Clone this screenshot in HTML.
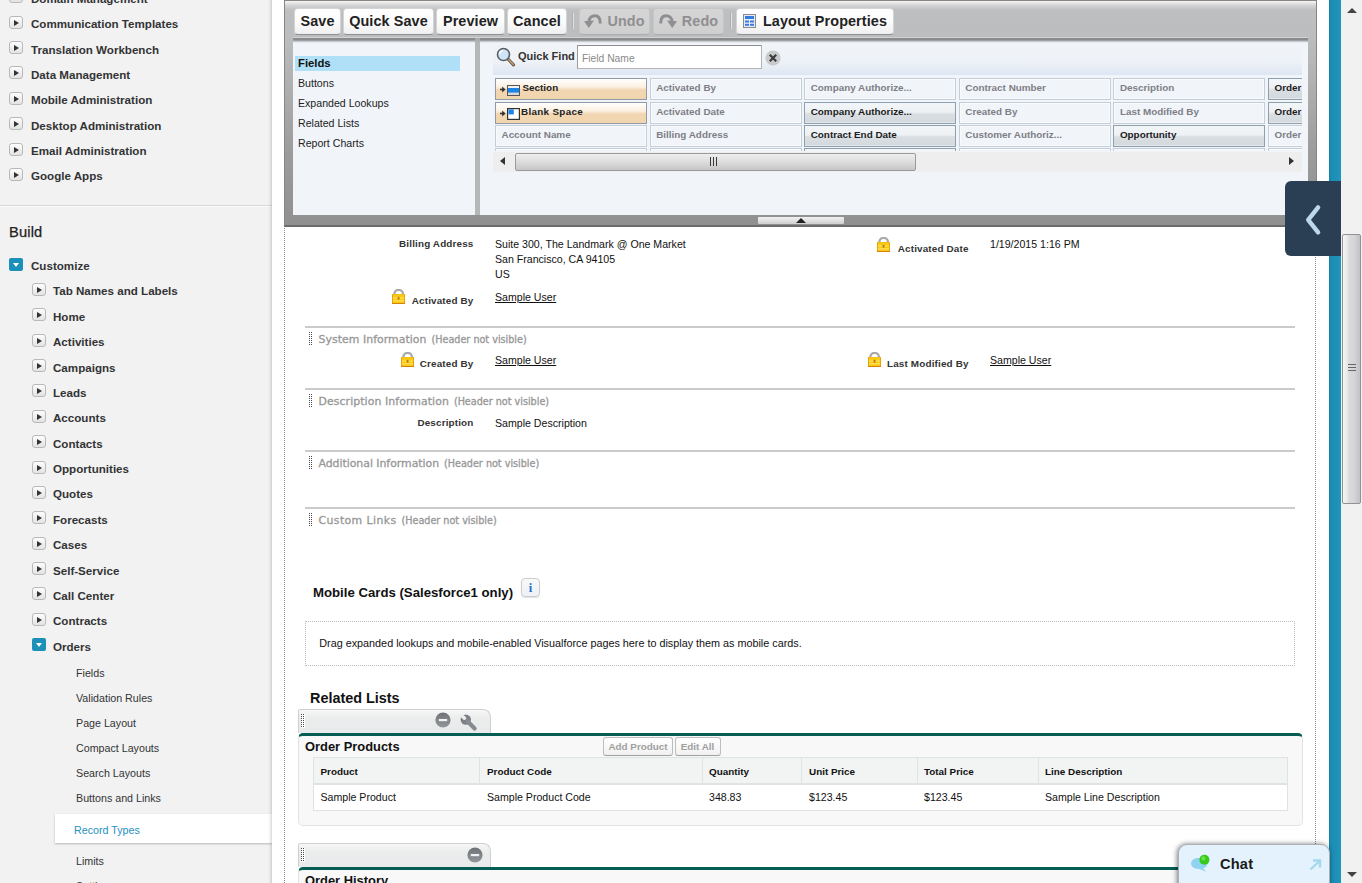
<!DOCTYPE html>
<html lang="en">
<head>
<meta charset="utf-8">
<title>Order Page Layout</title>
<style>
*{box-sizing:border-box;margin:0;padding:0}
html,body{width:1362px;height:883px;overflow:hidden;background:#fff}
body{position:relative;font-family:"Liberation Sans",sans-serif;font-size:12px;color:#222}
.abs{position:absolute}
/* ---------- sidebar ---------- */
#side{z-index:5;position:absolute;left:0;top:0;width:272px;height:883px;background:#f2f2f2;overflow:hidden}
#side:after{content:"";position:absolute;right:0;top:0;width:4px;height:100%;background:linear-gradient(to right,rgba(0,0,0,0),rgba(0,0,0,.05) 50%,rgba(0,0,0,.15))}
.n1,.n2,.n3{position:absolute;white-space:nowrap;line-height:16px;height:16px}
.n1{left:31px;font-weight:bold;font-size:11.6px;color:#333435}
.n2{left:53px;font-weight:bold;font-size:11.6px;color:#333435}
.n3{left:76px;font-size:10.7px;color:#333435}
.tg{position:absolute;width:14px;height:13px;border:1px solid #b9b9b9;border-radius:3px;background:linear-gradient(#fdfdfd,#e3e3e3)}
.tg:after{content:"";position:absolute;left:4px;top:2.5px;border-left:5px solid #333;border-top:3px solid transparent;border-bottom:3px solid transparent}
.tgo{position:absolute;width:14px;height:13px;border-radius:2px;background:#1b90b8}
.tgo:after{content:"";position:absolute;left:3.5px;top:4.5px;border-top:4.5px solid #fff;border-left:3.5px solid transparent;border-right:3.5px solid transparent}
/* ---------- main frame ---------- */
#main{position:absolute;left:0;top:0;width:1362px;height:883px;overflow:hidden}
#main .abs{position:absolute}
.vdot{position:absolute;top:228px;width:1px;height:656px;background-image:linear-gradient(#8a8a8a 50%,transparent 50%);background-size:1px 2px}
#bluebar{position:absolute;left:1329px;top:0;width:12px;height:883px;background:linear-gradient(to right,#0f7fa6 0,#1c8cb2 15%,#1e90b7 60%,#2096bc 100%)}
#vscroll{position:absolute;left:1341px;top:0;width:21px;height:883px;background:#f1f1f1}
#vthumb{position:absolute;left:1px;top:234px;width:19px;height:270px;border:1px solid #929292;border-radius:2px;background:linear-gradient(to right,#f6f6f6,#e6e6e7 28%,#dadadc 36%,#d6d6d9 65%,#c5c5c9 95%)}
/* palette */
#pal{position:absolute;left:284px;top:0;width:1033px;height:227px;border:1px solid #8b8485;border-bottom:2px solid #6b6b6b;background:linear-gradient(#f6f6f6 0,#d6d6d7 4px,#bebfc1 9px,#bcbdbf 36px,#b1b1b2 80px,#9c9c9c 150px,#909090 100%)}
#palin{position:absolute;left:8px;top:39px;width:1015px;height:175px;background:#f1f5f9}
#paltopsh{z-index:3;position:absolute;left:8px;top:36px;width:1015px;height:6px;background:linear-gradient(#d2d2d3 0,#d2d2d3 1px,#8a8b8d 1px,#8a8b8d 3px,#b3b6b9 4px,#dce0e4 5px,#f1f5f9 6px)}
.tb{position:absolute;top:7px;height:27px;border:1px solid #d4d4d5;border-bottom-color:#909092;border-radius:4px;background:linear-gradient(#fff,#fbfbfb 50%,#efefef);font-weight:bold;font-size:14.4px;line-height:25px;text-align:center;color:#222;white-space:nowrap;letter-spacing:.1px}
.tb.dis{background:linear-gradient(#d5d5d6,#cfcfd0);border-color:#c6c6c7;border-bottom-color:#adadaf;color:#8f8f91}
.tsep{position:absolute;top:12px;width:2px;height:16px;background:#e2e2e3;border-left:1px solid #afafb1}
.cat{position:absolute;left:13px;font-size:10.6px;line-height:14px;color:#222;white-space:nowrap}
.pc{position:absolute;width:152px;height:22px;border:1px solid #c3ced8;background:#f1f5f9;box-shadow:inset 0 0 0 1px #f8fafc;font-weight:bold;font-size:9.9px;line-height:18px;padding-left:5.5px;color:#7e7e86;white-space:nowrap;overflow:hidden}
.pc.en{box-shadow:inset 0 -1px 0 #e4e8eb;border-color:#8e9fae;background:linear-gradient(#f3f6f8 0,#eef1f4 45%,#d9dee2 55%,#d3d9de 100%);color:#1c1c1c}
.pc.sp{box-shadow:none;border-color:#8e9aa5;background:linear-gradient(#fff 0,#fbefdf 40%,#f1d6b1 55%,#f0d5af 100%);color:#222}
/* ---------- layout content ---------- */
.lb{position:absolute;letter-spacing:.16px;font-weight:bold;font-size:9.9px;line-height:14px;color:#333;white-space:nowrap;text-align:right}
.vl{position:absolute;font-size:10.6px;line-height:15px;color:#111;white-space:nowrap}
.vl u{text-decoration:underline}
.sep{position:absolute;left:305px;width:990px;height:2px;background:#cbcbcb}
.sh{position:absolute;left:318.5px;font-family:"DejaVu Sans","Liberation Sans",sans-serif;font-size:10.9px;line-height:16px;color:#979797;-webkit-text-stroke:.3px #979797;white-space:nowrap}
.sh small{font-size:9.65px;margin-left:5px;letter-spacing:0}
.grip{position:absolute;width:4px;height:14px}
.grip{background:repeating-linear-gradient(to bottom,rgba(255,255,255,0) 0,rgba(255,255,255,0) 1px,#fff 1px,#fff 2px),linear-gradient(to right,#4a4a4a 1px,#fff 1px,#fff 2px,#4a4a4a 2px,#4a4a4a 3px,#fff 3px)}
.h2{position:absolute;font-weight:bold;color:#111;white-space:nowrap}
.rtab{position:absolute;left:298px;width:193px;height:24px;border:1px solid #d0d0d0;border-bottom:0;border-radius:2px 8px 0 0;background:linear-gradient(#f7f7f7,#ebecec 35%,#e9eaeb)}
.rl{position:absolute;left:298px;width:1005px;border:1px solid #e3e3e3;border-top:3px solid #055e53;border-radius:5px;background:#f8f8f8}
.btn{position:absolute;height:19px;border:1px solid #bdbdbd;border-bottom-color:#9f9f9f;border-radius:3px;background:linear-gradient(#fff,#f1f1f1);font-weight:bold;font-size:9.9px;line-height:17px;text-align:center;color:#a0a0a0;white-space:nowrap}
.th{position:absolute;font-weight:bold;font-size:9.9px;line-height:14px;color:#111;white-space:nowrap}
.td{position:absolute;font-size:10.6px;line-height:14px;color:#111;white-space:nowrap}
</style>
</head>
<body>
<div id="side">
<i class="tg" style="left:9px;top:-10px"></i><div class="n1" style="top:-9.23px">Domain Management</div>
<i class="tg" style="left:9px;top:16px"></i><div class="n1" style="top:16.15px">Communication Templates</div>
<i class="tg" style="left:9px;top:41px"></i><div class="n1" style="top:41.53px">Translation Workbench</div>
<i class="tg" style="left:9px;top:66px"></i><div class="n1" style="top:66.91px">Data Management</div>
<i class="tg" style="left:9px;top:92px"></i><div class="n1" style="top:92.29px">Mobile Administration</div>
<i class="tg" style="left:9px;top:117px"></i><div class="n1" style="top:117.67px">Desktop Administration</div>
<i class="tg" style="left:9px;top:143px"></i><div class="n1" style="top:143.05px">Email Administration</div>
<i class="tg" style="left:9px;top:168px"></i><div class="n1" style="top:168.43px">Google Apps</div>
<div class="abs" style="left:0;top:205px;width:272px;height:1px;background:#d8d8d8"></div><div class="abs" style="left:0;top:206px;width:272px;height:1px;background:#fafafa"></div>
<div class="abs" style="left:9px;top:222px;font-size:14.7px;line-height:20px;color:#222;letter-spacing:.15px;-webkit-text-stroke:.25px #222">Build</div>
<i class="tgo" style="left:9px;top:258px"></i><div class="n1" style="top:258.1px">Customize</div>
<i class="tg" style="left:32px;top:283px"></i><div class="n2" style="top:283.40px">Tab Names and Labels</div>
<i class="tg" style="left:32px;top:308px"></i><div class="n2" style="top:308.78px">Home</div>
<i class="tg" style="left:32px;top:334px"></i><div class="n2" style="top:334.16px">Activities</div>
<i class="tg" style="left:32px;top:359px"></i><div class="n2" style="top:359.54px">Campaigns</div>
<i class="tg" style="left:32px;top:384px"></i><div class="n2" style="top:384.92px">Leads</div>
<i class="tg" style="left:32px;top:410px"></i><div class="n2" style="top:410.30px">Accounts</div>
<i class="tg" style="left:32px;top:435px"></i><div class="n2" style="top:435.68px">Contacts</div>
<i class="tg" style="left:32px;top:461px"></i><div class="n2" style="top:461.06px">Opportunities</div>
<i class="tg" style="left:32px;top:486px"></i><div class="n2" style="top:486.44px">Quotes</div>
<i class="tg" style="left:32px;top:511px"></i><div class="n2" style="top:511.82px">Forecasts</div>
<i class="tg" style="left:32px;top:537px"></i><div class="n2" style="top:537.20px">Cases</div>
<i class="tg" style="left:32px;top:562px"></i><div class="n2" style="top:562.58px">Self-Service</div>
<i class="tg" style="left:32px;top:587px"></i><div class="n2" style="top:587.96px">Call Center</div>
<i class="tg" style="left:32px;top:613px"></i><div class="n2" style="top:613.34px">Contracts</div>
<i class="tgo" style="left:32px;top:638px"></i><div class="n2" style="top:638.72px">Orders</div>
<div class="abs" style="left:55px;top:814px;width:217px;height:29px;background:#fff;box-shadow:0 1px 2px rgba(0,0,0,.25)"></div>
<div class="n3" style="left:74px;top:821.5px;color:#2590c2">Record Types</div>
<div class="n3" style="top:665.0px">Fields</div>
<div class="n3" style="top:690.3px">Validation Rules</div>
<div class="n3" style="top:715.1px">Page Layout</div>
<div class="n3" style="top:740.1px">Compact Layouts</div>
<div class="n3" style="top:764.9px">Search Layouts</div>
<div class="n3" style="top:790.2px">Buttons and Links</div>
<div class="n3" style="top:853.0px">Limits</div>
<div class="n3" style="top:878.1px">Settings</div>
</div>
<div id="main">
<!--M1-->
<div class="vdot" style="left:284px"></div><div class="vdot" style="left:1315px;top:229px"></div>
<div id="pal">
<div class="tb " style="left:9px;width:47px">Save</div>
<div class="tb " style="left:58px;width:91px">Quick Save</div>
<div class="tb " style="left:151px;width:69px">Preview</div>
<div class="tb " style="left:222px;width:60px">Cancel</div>
<div class="tsep" style="left:287px"></div>
<div class="tb dis" style="left:294px;width:71px"><svg width="18" height="14" viewBox="0 0 18 14" style="vertical-align:-2px;margin-right:5px"><path d="M5 8 C5 3.5 8 1.8 11 1.8 C14.5 1.8 16.3 5 16.3 9.5" fill="none" stroke="#8f8f91" stroke-width="3"/><path d="M0 7.2 L10 6.4 L4.8 14 Z" fill="#8f8f91"/></svg>Undo</div>
<div class="tb dis" style="left:368px;width:71px"><svg width="18" height="14" viewBox="0 0 18 14" style="vertical-align:-2px;margin-right:5px"><path d="M13 8 C13 3.5 10 1.8 7 1.8 C3.5 1.8 1.7 5 1.7 9.5" fill="none" stroke="#8f8f91" stroke-width="3"/><path d="M18 7.2 L8 6.4 L13.2 14 Z" fill="#8f8f91"/></svg>Redo</div>
<div class="tsep" style="left:445px"></div>
<div class="tb " style="left:451px;width:158px"><svg width="13" height="14" viewBox="0 0 13 14" style="vertical-align:-2px;margin-right:7px"><rect x=".5" y=".5" width="12" height="13" fill="#e6edf8" stroke="#8a8a8c"/><rect x="2" y="2" width="9" height="3" fill="#2f7de0"/><rect x="2" y="6.5" width="4" height="2" fill="#3b7be0"/><rect x="7" y="6.5" width="4" height="2" fill="#3b7be0"/><rect x="2" y="9.8" width="4" height="2" fill="#3b7be0"/><rect x="7" y="9.8" width="4" height="2" fill="#3b7be0"/></svg>Layout Properties</div>
<div id="paltopsh"></div><div class="abs" style="z-index:4;left:190px;top:37px;width:5px;height:6px;background:linear-gradient(#a9aaac,#b6b7b9)"></div><div id="palin">
<div class="abs" style="left:2px;top:16px;width:165px;height:15px;background:#afe0f8"></div>
<div class="cat" style="left:5px;top:15.9px;font-weight:bold;color:#111;font-size:11.3px">Fields</div>
<div class="cat" style="left:5px;top:36.1px">Buttons</div>
<div class="cat" style="left:5px;top:56.0px">Expanded Lookups</div>
<div class="cat" style="left:5px;top:76.0px">Related Lists</div>
<div class="cat" style="left:5px;top:96.0px">Report Charts</div>
<div class="abs" style="left:182px;top:0px;width:5px;height:175px;background:#b6b7b9"></div>
<div class="abs" style="left:200px;top:5px;width:809px;height:30px;background:linear-gradient(#f0f3f7 0,#eef2f7 55%,#dde6f3 100%)"></div>
<svg class="abs" style="left:203px;top:7px" width="20" height="20" viewBox="0 0 20 20"><line x1="11.5" y1="11.5" x2="17.5" y2="17.8" stroke="#6b5a4a" stroke-width="3.2" stroke-linecap="round"/><line x1="12.5" y1="12.5" x2="17.3" y2="17.5" stroke="#c9a27a" stroke-width="1.2" stroke-linecap="round"/><circle cx="7.5" cy="7.5" r="6" fill="#cfe6f7" stroke="#5a5f66" stroke-width="1.6"/><path d="M3.6 7 A4 4 0 0 1 7 3.4" stroke="#fff" stroke-width="1.4" fill="none"/></svg>
<div class="abs" style="left:225px;top:9px;font-weight:bold;font-size:11px;line-height:14px;color:#333;white-space:nowrap">Quick Find</div>
<div class="abs" style="left:284px;top:5px;width:185px;height:24px;background:#fff;border:1px solid #b4b4b4;border-top-color:#8f8f8f;border-left-color:#9c9c9c;font-size:10.3px;line-height:25px;padding-left:4px;color:#8a8a8a">Field Name</div>
<svg class="abs" style="left:472px;top:10px" width="16" height="16" viewBox="0 0 16 16"><circle cx="8" cy="8" r="7.6" fill="#c9cacb"/><path d="M4.8 4.8 L11.2 11.2 M11.2 4.8 L4.8 11.2" stroke="#3c3c3c" stroke-width="2.2"/></svg>
<div class="abs" style="left:200px;top:36px;width:809px;height:75px;overflow:hidden">
<div class="pc sp" style="left:2.0px;top:2.0px"><svg width="6" height="7" viewBox="0 0 6 7" style="position:absolute;left:3.5px;top:7px"><path d="M0 3.5 H3" stroke="#333" stroke-width="1.6" fill="none"/><path d="M2.2 .6 L5.6 3.5 L2.2 6.4 Z" fill="#333"/></svg><svg width="13" height="11" viewBox="0 0 13 11" style="position:absolute;left:10.5px;top:6px"><rect x=".5" y=".5" width="12" height="10" fill="#d9d9d9" stroke="#555"/><rect x="1" y="1" width="11" height="2" fill="#f1f1f1"/><rect x="1" y="3" width="11" height="4.6" fill="#1b84ea"/></svg><span style="margin-left:21px">Section</span></div>
<div class="pc " style="left:156.7px;top:2.0px">Activated By</div>
<div class="pc " style="left:311.2px;top:2.0px">Company Authorize...</div>
<div class="pc " style="left:465.8px;top:2.0px">Contract Number</div>
<div class="pc " style="left:620.4px;top:2.0px">Description</div>
<div class="pc en" style="left:775.0px;top:2.0px">Order</div>
<div class="pc sp" style="left:2.0px;top:25.8px"><svg width="6" height="7" viewBox="0 0 6 7" style="position:absolute;left:3.5px;top:7px"><path d="M0 3.5 H3" stroke="#333" stroke-width="1.6" fill="none"/><path d="M2.2 .6 L5.6 3.5 L2.2 6.4 Z" fill="#333"/></svg><svg width="13" height="12" viewBox="0 0 13 12" style="position:absolute;left:10.5px;top:5.5px"><rect x=".6" y=".6" width="11.8" height="10.8" fill="#fff" stroke="#333" stroke-width="1.2"/><rect x="1.4" y="1.4" width="5.4" height="5" fill="#1b84ea"/></svg><span style="margin-left:19.5px;letter-spacing:.3px">Blank Space</span></div>
<div class="pc " style="left:156.7px;top:25.8px">Activated Date</div>
<div class="pc en" style="left:311.2px;top:25.8px">Company Authorize...</div>
<div class="pc " style="left:465.8px;top:25.8px">Created By</div>
<div class="pc " style="left:620.4px;top:25.8px">Last Modified By</div>
<div class="pc en" style="left:775.0px;top:25.8px">Order</div>
<div class="pc " style="left:2.0px;top:49.4px">Account Name</div>
<div class="pc " style="left:156.7px;top:49.4px">Billing Address</div>
<div class="pc en" style="left:311.2px;top:49.4px">Contract End Date</div>
<div class="pc " style="left:465.8px;top:49.4px">Customer Authoriz...</div>
<div class="pc en" style="left:620.4px;top:49.4px">Opportunity</div>
<div class="pc " style="left:775.0px;top:49.4px">Order</div>
<div class="pc " style="left:2.0px;top:72.3px"></div>
<div class="pc " style="left:156.7px;top:72.3px"></div>
<div class="pc en" style="left:311.2px;top:72.3px"></div>
<div class="pc " style="left:465.8px;top:72.3px"></div>
<div class="pc " style="left:620.4px;top:72.3px"></div>
<div class="pc " style="left:775.0px;top:72.3px"></div>
</div>
<div class="abs" style="left:200px;top:112px;width:809px;height:20px;background:#eeeeee"></div>
<div class="abs" style="left:222px;top:112.5px;width:401px;height:18.5px;border:1px solid #9a9a9a;border-radius:2px;background:linear-gradient(#eeeeee,#dcdcdd 50%,#c6c6c8)"></div>
<div class="abs" style="left:207px;top:117px;border-right:5px solid #333;border-top:4px solid transparent;border-bottom:4px solid transparent"></div>
<div class="abs" style="left:996px;top:117px;border-left:5px solid #333;border-top:4px solid transparent;border-bottom:4px solid transparent"></div>
<div class="abs" style="left:417px;top:117px;width:9px;height:9px;background:linear-gradient(to right,#3a3a3a 1px,transparent 1px,transparent 3px,#3a3a3a 3px,#3a3a3a 4px,transparent 4px,transparent 6px,#3a3a3a 6px,#3a3a3a 7px,transparent 7px)"></div>
</div>
<div class="abs" style="left:473px;top:216px;width:86px;height:7px;background:linear-gradient(#f2f2f2,#cfcfcf);border-radius:1px"></div>
<div class="abs" style="left:511px;top:217px;border-bottom:5px solid #222;border-left:5px solid transparent;border-right:5px solid transparent"></div>
</div>
<div id="bluebar"></div>
<div id="vscroll"><div id="vthumb"></div>
<div class="abs" style="left:6px;top:8px;border-bottom:5px solid #444;border-left:5px solid transparent;border-right:5px solid transparent"></div>
<div class="abs" style="left:6px;top:872px;border-top:5px solid #444;border-left:5px solid transparent;border-right:5px solid transparent"></div>
<div class="abs" style="left:7px;top:364px;width:8px;height:9px;background:linear-gradient(#666 1px,transparent 1px,transparent 3px,#666 3px,#666 4px,transparent 4px,transparent 6px,#666 6px,#666 7px,transparent 7px)"></div>
</div>
<div class="abs" style="left:1285px;top:181px;width:56px;height:75px;background:#2a3e54;border-radius:6px 0 0 6px"></div>
<svg class="abs" style="left:1302px;top:203px" width="22" height="34" viewBox="0 0 22 34"><path d="M16.1 4.4 L6.2 16.9 L16.1 29.4" stroke="#bcd8ec" stroke-width="4.4" fill="none" stroke-linecap="round" stroke-linejoin="round"/></svg>
<!--/M1-->
<!--M2-->
<div class="lb" style="left:273.5px;width:200px;top:237.4px">Billing Address</div>
<div class="vl" style="left:495px;top:236.8px">Suite 300, The Landmark @ One Market</div>
<div class="vl" style="left:495px;top:251.8px">San Francisco, CA 94105</div>
<div class="vl" style="left:495px;top:266.8px">US</div>
<svg class="abs" style="left:392.0px;top:289.0px" width="13" height="15" viewBox="0 0 13 15"><path d="M2.35 6.5 V5.2 A4.3 4.3 0 0 1 10.95 5.2 V6.5" fill="none" stroke="#a9a9a9" stroke-width="2.3"/><rect x="0" y="5.1" width="13" height="9.9" fill="#e8990c"/><rect x=".9" y="5.3" width="11.2" height="8.8" fill="#f8cb12"/><rect x=".9" y="8.6" width="11.2" height=".9" fill="#ffe977"/><rect x=".9" y="11.4" width="11.2" height=".9" fill="#ffe977"/><rect x="5.6" y="7.8" width="1.9" height="2.8" fill="#c07a0a"/><rect x="0" y="14.1" width="13" height=".9" fill="#d47f0a"/></svg>
<div class="lb" style="left:273.5px;width:200px;top:293.9px">Activated By</div>
<div class="vl" style="left:495px;top:290.0px"><u>Sample User</u></div>
<svg class="abs" style="left:877.0px;top:237.0px" width="13" height="15" viewBox="0 0 13 15"><path d="M2.35 6.5 V5.2 A4.3 4.3 0 0 1 10.95 5.2 V6.5" fill="none" stroke="#a9a9a9" stroke-width="2.3"/><rect x="0" y="5.1" width="13" height="9.9" fill="#e8990c"/><rect x=".9" y="5.3" width="11.2" height="8.8" fill="#f8cb12"/><rect x=".9" y="8.6" width="11.2" height=".9" fill="#ffe977"/><rect x=".9" y="11.4" width="11.2" height=".9" fill="#ffe977"/><rect x="5.6" y="7.8" width="1.9" height="2.8" fill="#c07a0a"/><rect x="0" y="14.1" width="13" height=".9" fill="#d47f0a"/></svg>
<div class="lb" style="left:768.6px;width:200px;top:242.1px">Activated Date</div>
<div class="vl" style="left:990px;top:236.8px">1/19/2015 1:16 PM</div>
<div class="sep" style="top:326px"></div><div class="grip" style="left:309px;top:332px"></div><div class="sh" style="top:331.6px;letter-spacing:0.05px">System Information<small>(Header not visible)</small></div>
<svg class="abs" style="left:400.5px;top:352.3px" width="13" height="15" viewBox="0 0 13 15"><path d="M2.35 6.5 V5.2 A4.3 4.3 0 0 1 10.95 5.2 V6.5" fill="none" stroke="#a9a9a9" stroke-width="2.3"/><rect x="0" y="5.1" width="13" height="9.9" fill="#e8990c"/><rect x=".9" y="5.3" width="11.2" height="8.8" fill="#f8cb12"/><rect x=".9" y="8.6" width="11.2" height=".9" fill="#ffe977"/><rect x=".9" y="11.4" width="11.2" height=".9" fill="#ffe977"/><rect x="5.6" y="7.8" width="1.9" height="2.8" fill="#c07a0a"/><rect x="0" y="14.1" width="13" height=".9" fill="#d47f0a"/></svg>
<div class="lb" style="left:273.5px;width:200px;top:357.1px">Created By</div>
<div class="vl" style="left:495px;top:352.8px"><u>Sample User</u></div>
<svg class="abs" style="left:867.7px;top:352.3px" width="13" height="15" viewBox="0 0 13 15"><path d="M2.35 6.5 V5.2 A4.3 4.3 0 0 1 10.95 5.2 V6.5" fill="none" stroke="#a9a9a9" stroke-width="2.3"/><rect x="0" y="5.1" width="13" height="9.9" fill="#e8990c"/><rect x=".9" y="5.3" width="11.2" height="8.8" fill="#f8cb12"/><rect x=".9" y="8.6" width="11.2" height=".9" fill="#ffe977"/><rect x=".9" y="11.4" width="11.2" height=".9" fill="#ffe977"/><rect x="5.6" y="7.8" width="1.9" height="2.8" fill="#c07a0a"/><rect x="0" y="14.1" width="13" height=".9" fill="#d47f0a"/></svg>
<div class="lb" style="left:768.6px;width:200px;top:357.1px">Last Modified By</div>
<div class="vl" style="left:990px;top:352.8px"><u>Sample User</u></div>
<div class="sep" style="top:388px"></div><div class="grip" style="left:309px;top:394px"></div><div class="sh" style="top:393.6px;letter-spacing:0.08px">Description Information<small>(Header not visible)</small></div>
<div class="lb" style="left:273.5px;width:200px;top:415.9px">Description</div>
<div class="vl" style="left:495px;top:415.8px">Sample Description</div>
<div class="sep" style="top:450.4px"></div><div class="grip" style="left:309px;top:456.4px"></div><div class="sh" style="top:456.0px;letter-spacing:-0.03px">Additional Information<small>(Header not visible)</small></div>
<div class="sep" style="top:507px"></div><div class="grip" style="left:309px;top:513px"></div><div class="sh" style="top:512.6px;letter-spacing:0.4px">Custom Links<small>(Header not visible)</small></div>
<div class="h2" style="left:313px;top:584px;font-size:13.2px;line-height:18px">Mobile Cards (Salesforce1 only)</div>
<div class="abs" style="left:521px;top:578px;width:19px;height:19px;border:1px solid #cdcdcd;border-radius:4px;background:linear-gradient(#f7f9fb,#eef1f5);box-shadow:0 1px 1px rgba(0,0,0,.12);font-family:'Liberation Serif',serif;font-weight:bold;font-size:12.5px;line-height:18px;text-align:center;color:#1b6fc8">i</div>
<div class="abs" style="left:305px;top:621px;width:990px;height:45px;border:1px dotted #bdbdbd"></div>
<div class="vl" style="left:319.3px;top:636px;font-size:10.8px">Drag expanded lookups and mobile-enabled Visualforce pages here to display them as mobile cards.</div>
<div class="h2" style="left:310px;top:688px;font-size:14.4px;line-height:20px">Related Lists</div>
<div class="rtab" style="top:709px"></div>
<div class="grip" style="left:301px;top:714px"></div>
<svg class="abs" style="left:434.6px;top:712.4px" width="16" height="16" viewBox="0 0 16 16"><defs><linearGradient id="mg" x1="0" y1="0" x2="0" y2="1"><stop offset="0" stop-color="#6f7378"/><stop offset="1" stop-color="#93979b"/></linearGradient></defs><circle cx="8" cy="8" r="7.6" fill="url(#mg)"/><rect x="3.8" y="7" width="8.4" height="2.2" fill="#f2f2f2"/></svg>
<svg class="abs" style="left:460.0px;top:714.0px" width="18" height="18" viewBox="0 0 18 18"><circle cx="5.8" cy="5.6" r="5.2" fill="#7d8186"/><line x1="7.5" y1="7.3" x2="14.6" y2="14.4" stroke="#878b90" stroke-width="4.2" stroke-linecap="round"/><line x1="4.6" y1="4.4" x2="-1" y2="-1.2" stroke="#eeeeef" stroke-width="3.4"/><circle cx="4.4" cy="4.2" r="1.7" fill="#eeeeef"/></svg>
<div class="rl" style="top:732.5px;height:93px"></div>
<div class="h2" style="left:305px;top:738px;font-size:12.9px;line-height:18px">Order Products</div>
<div class="btn" style="left:603px;top:737px;width:70px">Add Product</div>
<div class="btn" style="left:674.5px;top:737px;width:46px">Edit All</div>
<div class="abs" style="left:313px;top:757px;width:975px;height:53.5px;border:1px solid #e0e3e5;background:#fff"></div>
<div class="abs" style="left:314px;top:758px;width:973px;height:24.5px;background:#f2f3f3;border-bottom:2px solid #e0e3e5;box-sizing:content-box"></div>
<div class="th" style="left:320.5px;top:764.5px">Product</div>
<div class="td" style="left:320.5px;top:790.3px">Sample Product</div>
<div class="th" style="left:487px;top:764.5px">Product Code</div>
<div class="td" style="left:487px;top:790.3px">Sample Product Code</div>
<div class="th" style="left:709px;top:764.5px">Quantity</div>
<div class="td" style="left:709px;top:790.3px">348.83</div>
<div class="th" style="left:809px;top:764.5px">Unit Price</div>
<div class="td" style="left:809px;top:790.3px">$123.45</div>
<div class="th" style="left:924px;top:764.5px">Total Price</div>
<div class="td" style="left:924px;top:790.3px">$123.45</div>
<div class="th" style="left:1045px;top:764.5px">Line Description</div>
<div class="td" style="left:1045px;top:790.3px">Sample Line Description</div>
<div class="abs" style="left:479.3px;top:758px;width:1px;height:25px;background:#e0e3e5"></div>
<div class="abs" style="left:702.4px;top:758px;width:1px;height:25px;background:#e0e3e5"></div>
<div class="abs" style="left:801.3px;top:758px;width:1px;height:25px;background:#e0e3e5"></div>
<div class="abs" style="left:917.2px;top:758px;width:1px;height:25px;background:#e0e3e5"></div>
<div class="abs" style="left:1038.4px;top:758px;width:1px;height:25px;background:#e0e3e5"></div>
<div class="rtab" style="top:843px"></div>
<div class="grip" style="left:301px;top:848px"></div>
<svg class="abs" style="left:467.0px;top:846.6px" width="16" height="16" viewBox="0 0 16 16"><defs><linearGradient id="mg" x1="0" y1="0" x2="0" y2="1"><stop offset="0" stop-color="#6f7378"/><stop offset="1" stop-color="#93979b"/></linearGradient></defs><circle cx="8" cy="8" r="7.6" fill="url(#mg)"/><rect x="3.8" y="7" width="8.4" height="2.2" fill="#f2f2f2"/></svg>
<div class="rl" style="top:866.5px;height:60px"></div>
<div class="h2" style="left:305px;top:872px;font-size:12.9px;line-height:18px">Order History</div>
<div class="abs" style="left:1178px;top:844px;width:151.5px;height:50px;border:1px solid #aab0b5;border-radius:9px 9px 0 0;background:#e4f2fd;box-shadow:-1px 0 5px rgba(0,0,0,.5)"></div>
<svg class="abs" style="left:1190px;top:853px" width="22" height="20" viewBox="0 0 22 20"><path d="M1 10.5 C1 7 4.5 5 8.5 5 C13 5 17.5 7.3 17.5 10.6 C17.5 13.2 15.2 15 13.2 15.4 L16.4 18.8 L9.4 16 C4.6 16 1 13.8 1 10.5 Z" fill="#8fd3f1"/><circle cx="14.4" cy="6.8" r="5" fill="#35c918"/><circle cx="13.4" cy="5.4" r="2.2" fill="#7ee85f" opacity=".7"/></svg>
<div class="h2" style="left:1220px;top:853.5px;font-size:14.6px;line-height:20px;color:#1a1a1a;letter-spacing:.2px">Chat</div>
<svg class="abs" style="left:1309px;top:859px" width="13" height="12" viewBox="0 0 13 12"><path d="M1.5 10.5 L10.5 2 M4 1.5 H11 V8.5" stroke="#a6d8ec" stroke-width="2.4" fill="none"/></svg>
<!--/M2-->
</div>
</body>
</html>
